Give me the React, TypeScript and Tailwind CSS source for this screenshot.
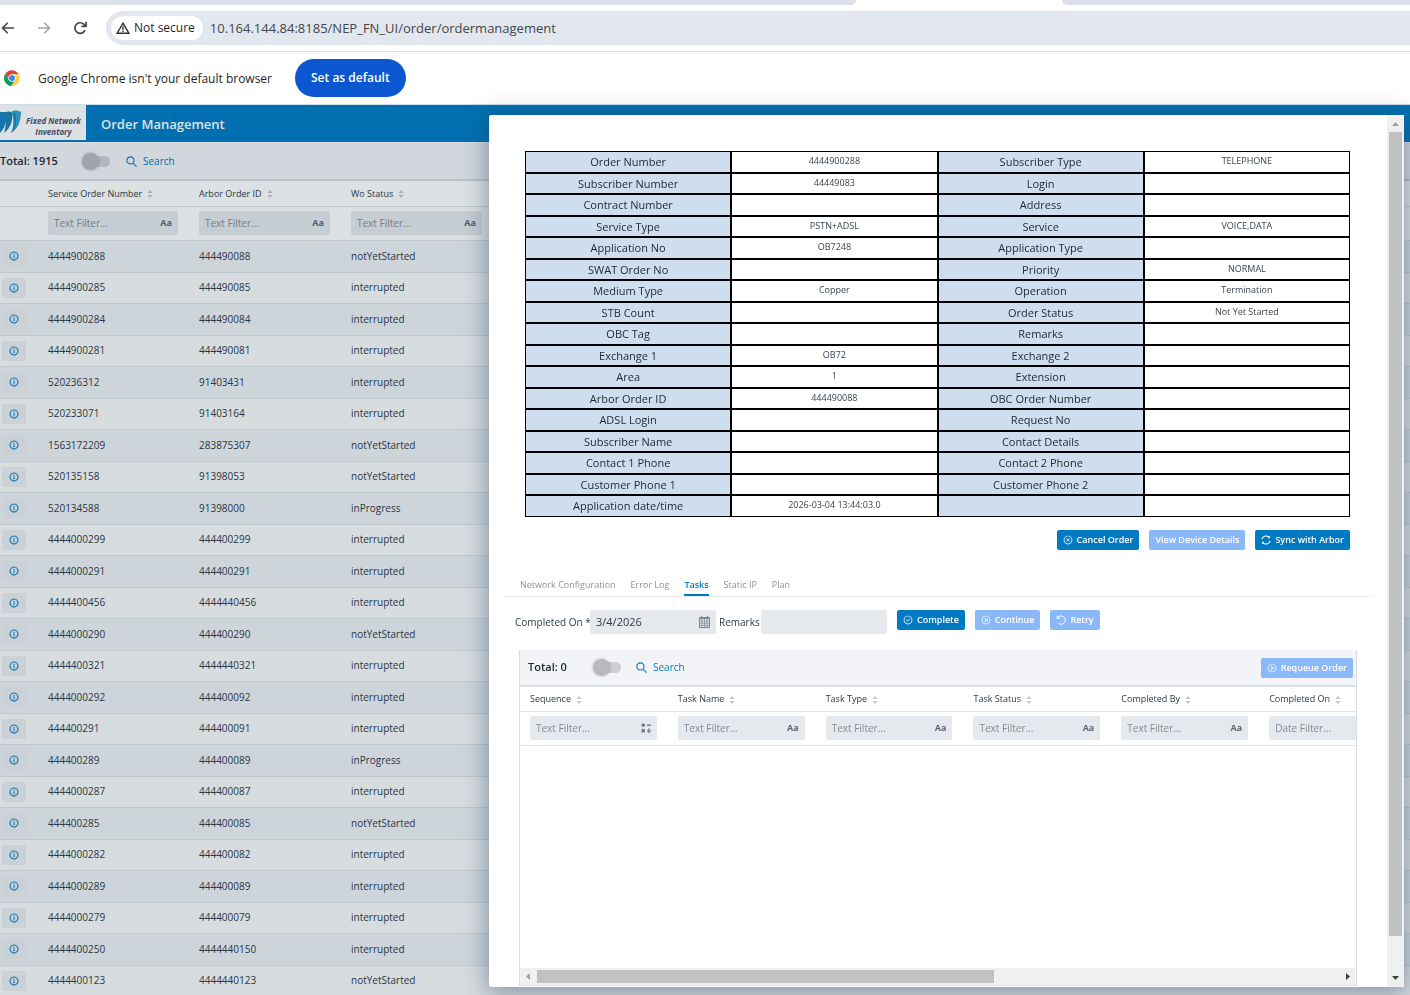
import { AiOutlineInfoCircle, AiOutlineCloseCircle, AiOutlineCheckCircle, AiOutlinePlayCircle } from "react-icons/ai";

const orders = [
  ["4444900288", "444490088", "notYetStarted"],
  ["4444900285", "444490085", "interrupted"],
  ["4444900284", "444490084", "interrupted"],
  ["4444900281", "444490081", "interrupted"],
  ["520236312", "91403431", "interrupted"],
  ["520233071", "91403164", "interrupted"],
  ["1563172209", "283875307", "notYetStarted"],
  ["520135158", "91398053", "notYetStarted"],
  ["520134588", "91398000", "inProgress"],
  ["4444000299", "444400299", "interrupted"],
  ["4444000291", "444400291", "interrupted"],
  ["4444400456", "4444440456", "interrupted"],
  ["4444000290", "444400290", "notYetStarted"],
  ["4444400321", "4444440321", "interrupted"],
  ["4444000292", "444400092", "interrupted"],
  ["444400291", "444400091", "interrupted"],
  ["444400289", "444400089", "inProgress"],
  ["4444000287", "444400087", "interrupted"],
  ["444400285", "444400085", "notYetStarted"],
  ["4444000282", "444400082", "interrupted"],
  ["4444000289", "444400089", "interrupted"],
  ["4444000279", "444400079", "interrupted"],
  ["4444400250", "4444440150", "interrupted"],
  ["4444400123", "4444440123", "notYetStarted"],
];

const details = [
  ["Order Number", "4444900288", "Subscriber Type", "TELEPHONE"],
  ["Subscriber Number", "44449083", "Login", ""],
  ["Contract Number", "", "Address", ""],
  ["Service Type", "PSTN+ADSL", "Service", "VOICE,DATA"],
  ["Application No", "OB7248", "Application Type", ""],
  ["SWAT Order No", "", "Priority", "NORMAL"],
  ["Medium Type", "Copper", "Operation", "Termination"],
  ["STB Count", "", "Order Status", "Not Yet Started"],
  ["OBC Tag", "", "Remarks", ""],
  ["Exchange 1", "OB72", "Exchange 2", ""],
  ["Area", "1", "Extension", ""],
  ["Arbor Order ID", "444490088", "OBC Order Number", ""],
  ["ADSL Login", "", "Request No", ""],
  ["Subscriber Name", "", "Contact Details", ""],
  ["Contact 1 Phone", "", "Contact 2 Phone", ""],
  ["Customer Phone 1", "", "Customer Phone 2", ""],
  ["Application date/time", "2026-03-04 13:44:03.0", "", ""],
];

const orderColumns = ["Service Order Number", "Arbor Order ID", "Wo Status"];
const taskColumns = ["Sequence", "Task Name", "Task Type", "Task Status", "Completed By", "Completed On"];
const tabs = ["Network Configuration", "Error Log", "Tasks", "Static IP", "Plan"];

function SortIcon() {
  return (
    <svg viewBox="0 0 6 8" className="ml-[5px] inline-block h-2 w-[6px] align-middle" fill="#c3c6cc">
      <path d="M3 0l2.600 3H0.400zM3 8L0.400 5h5.200z" />
    </svg>
  );
}

function SearchIcon() {
  return (
    <svg viewBox="0 0 12 12" className="h-[11px] w-[11px]" fill="none" stroke="currentColor" strokeWidth="1.2">
      <circle cx="4.8" cy="4.8" r="3.9" />
      <path d="M7.7 7.7l3.8 3.8" />
    </svg>
  );
}

function SyncIcon() {
  return (
    <svg viewBox="0 0 12 12" className="h-[10px] w-[10px]" fill="none" stroke="currentColor" strokeWidth="1.3">
      <path d="M1.1 5A5 5 0 0 1 10 3.200M10.900 7A5 5 0 0 1 2 8.800" />
      <path d="M10.300 1.200v2.200H8.200M1.700 10.800V8.600h2.100" strokeWidth="0.9" />
    </svg>
  );
}

function RetryIcon() {
  return (
    <svg viewBox="0 0 12 12" className="h-[10px] w-[10px]" fill="none" stroke="currentColor" strokeWidth="1.2">
      <path d="M1.8 3.6A5 5 0 1 1 3.2 10.2" />
      <path d="M1.3 1v3h3.1" />
    </svg>
  );
}

function OperatorsIcon() {
  return (
    <svg viewBox="0 0 10 10" className="h-[10px] w-[10px]" fill="none" stroke="#5d6772" strokeWidth="1.3">
      <path d="M0.3 2.2h3.8M2.2 0.3v3.8M6 2.2h3.8M0.7 6.3l3 3M3.7 6.3l-3 3M6 7.8h3.8M7.9 5.6v1.2M7.9 8.8V10" />
    </svg>
  );
}

function CalendarIcon() {
  return (
    <svg viewBox="0 0 11 12" className="h-3 w-[11px]" fill="none" stroke="#7d8590">
      <path d="M0.500 1.500h10v10H0.500zM0 2.500h11" />
      <path d="M0 5h11M0 7.200h11M0 9.400h11M3 3v9M5.500 3v9M8 3v9" strokeWidth="0.7" />
      <path d="M2.500 0v2M8.500 0v2" />
    </svg>
  );
}

function ChromeLogo() {
  return (
    <svg viewBox="0 0 48 48" className="h-4 w-4 shrink-0">
      <path fill="#db4437" d="M24 13h20.2A24 24 0 0 0 3.2 12L14.5 29.5z" />
      <path fill="#0f9d58" d="M14.5 29.5L3.2 12A24 24 0 0 0 22 48L33.5 29.5z" />
      <path fill="#ffcd40" d="M24 13h20.6A24 24 0 0 1 22 48L33.5 29.5z" />
      <circle cx="24" cy="24" r="11" fill="#fff" />
      <circle cx="24" cy="24" r="8.8" fill="#4285f4" />
    </svg>
  );
}

function Toggle({ label }: { label: string }) {
  return (
    <label className="relative flex h-[18px] w-7 items-center">
      <input type="checkbox" aria-label={label} className="peer sr-only" />
      <span className="ml-1 h-[11px] w-6 rounded-full bg-black/15" />
      <span className="absolute left-0 h-[17px] w-[17px] rounded-full bg-[#b9b9bb] shadow-[0_0_2px_1px_rgba(0,0,0,0.15)] peer-checked:left-3" />
    </label>
  );
}

function Filter({ label, placeholder = "Text Filter...", children }: { label: string; placeholder?: string; children?: React.ReactNode }) {
  return (
    <div className="flex h-6 items-center rounded-[2px] bg-[#e5e8ed] px-[6px]">
      <input aria-label={label + " filter"} placeholder={placeholder} className="w-0 min-w-0 flex-1 bg-transparent text-[10px] font-normal outline-none placeholder:text-[#848b96]" />
      {children}
    </div>
  );
}

function CaseButton() {
  return (
    <button aria-label="Match case" className="text-[9px] font-bold text-[#5d6772]">Aa</button>
  );
}

function ActionButton({ icon, text, disabled }: { icon?: React.ReactNode; text: string; disabled?: boolean }) {
  return (
    <button
      disabled={disabled}
      className="flex h-5 items-center gap-1 rounded-[2px] bg-[#007ac3] px-[6px] text-[9px] font-semibold whitespace-nowrap text-white disabled:bg-[#8bb8f8]"
    >
      {icon}
      {text}
    </button>
  );
}

function BrowserBar() {
  return (
    <div className="text-[#1f1f1f]">
      <div className="flex h-[5px] justify-between bg-white">
        <div className="w-[856px] rounded-br-lg bg-[#dde1e9]" />
        <div className="w-[348px] rounded-bl-lg bg-[#dde1e9]" />
      </div>
      <div className="flex h-[47px] items-center border-b border-[#dcdfe3] bg-white">
        <button aria-label="Back" className="w-[15px]">
          <svg viewBox="0 0 15 12" className="h-3 w-[15px]" fill="none" stroke="#474747" strokeWidth="1.6">
            <path d="M14 6H2.5M7.8 0.8L2.5 6l5.3 5.2" />
          </svg>
        </button>
        <button aria-label="Forward" className="ml-[22px] w-[15px]">
          <svg viewBox="0 0 15 12" className="h-3 w-[15px]" fill="none" stroke="#a6a6a6" strokeWidth="1.6">
            <path d="M1 6h11.5M7.2 0.8L12.5 6l-5.3 5.2" />
          </svg>
        </button>
        <button aria-label="Reload" className="ml-[21px]">
          <svg viewBox="0 0 14 14" className="h-[14px] w-[14px]" fill="none" stroke="#474747" strokeWidth="1.7">
            <path d="M12 9.2A5.3 5.3 0 1 1 11 3.4L12.6 5" />
            <path d="M13 0.8v4.6H8.4" />
          </svg>
        </button>
        <div className="ml-[19px] flex h-[34px] flex-1 items-center rounded-l-full bg-[#e2e6ee] pl-[5px]">
          <button className="flex h-6 items-center gap-1 rounded-full bg-white pr-2 pl-[5px] text-[12px]">
            <svg viewBox="0 0 14 12" className="h-3 w-[14px]" fill="none" stroke="#333" strokeWidth="1.4">
              <path d="M7 1.2L12.8 11.2H1.2zM7 4.6v3.4M7 8.8v1.2" />
            </svg>
            Not secure
          </button>
          <input
            aria-label="Address"
            defaultValue="10.164.144.84:8185/NEP_FN_UI/order/ordermanagement"
            className="ml-[7px] flex-1 bg-transparent pt-px text-[13px] text-[#44474b] outline-none"
          />
        </div>
      </div>
      <div className="flex h-[53px] items-center border-b border-[#c7dfec] bg-white pl-1">
        <ChromeLogo />
        <p className="ml-[18px] w-[257px] pt-px text-[12px]">Google Chrome isn't your default browser</p>
        <button className="h-[38px] rounded-full bg-[#0b57d0] px-4 text-[12px] font-semibold text-white">Set as default</button>
      </div>
    </div>
  );
}

function OrderList() {
  return (
    <main className="flex-1 bg-white">
      <div className="flex h-[37px] items-stretch bg-[#007cc4]">
        <div className="flex h-[35px] w-[86px] items-center bg-white">
          <svg viewBox="0 0 21 26" className="h-[26px] w-[21px]">
            <path d="M0 2h5c3 5 1 15-5 21z" fill="#1583bd" />
            <path d="M4 3c3-2 6-2 8 0 1 7-1 15-8 20 2-6 3-14 0-20z" fill="#1d7eb5" />
            <path d="M11 2c3-2 7-2 10 0 0 9-3 17-10 21 3-7 3-15 0-21z" fill="#35a3cf" />
            <path d="M13 3c3 6 2 13-2 20 5-4 6-12 4-20z" fill="#1a7bb0" />
          </svg>
          <div className="flex-1 pt-[6px] text-center text-[8px] leading-[11px] font-bold whitespace-nowrap text-[#475272] italic">
            Fixed Network
            <br />
            Inventory
          </div>
        </div>
        <h1 className="ml-[15px] self-center pt-[2px] text-[13px] font-semibold text-white">Order Management</h1>
      </div>
      <div className="mt-px flex h-[38px] items-center border-b-2 border-[#d5dae0] bg-[#f1f4f7] pt-px">
        <p className="w-[82px] text-[11px] font-semibold text-[#1d2733]">Total: 1915</p>
        <Toggle label="Show order filters" />
        <button className="ml-4 flex items-center gap-[6px] text-[10px] font-medium text-[#007ac3]">
          <SearchIcon />
          Search
        </button>
      </div>
      <table className="w-full table-fixed text-left text-[#2e3947]">
        <colgroup>
          <col className="w-[40px]" />
          <col className="w-[151px]" />
          <col className="w-[152px]" />
          <col className="w-[152px]" />
          <col />
        </colgroup>
        <thead>
          <tr className="h-[25px] border-b border-[#dde2e7]">
            <th />
            {orderColumns.map((column) => (
              <th key={column} className="pl-2 text-[9px] font-medium whitespace-nowrap">
                {column}
                <SortIcon />
              </th>
            ))}
            <th />
          </tr>
          <tr className="h-[34px] border-b border-[#dde2e7]">
            <td />
            {orderColumns.map((column) => (
              <td key={column} className="pr-[13px] pl-2">
                <Filter label={column}><CaseButton /></Filter>
              </td>
            ))}
            <td />
          </tr>
        </thead>
        <tbody className="text-[10px]">
          {orders.map((order, index) => (
            <tr key={index} className="border-b border-[#dde2e7] odd:h-[32px] odd:bg-[#edf1f6] even:h-[31px] even:bg-[#f8fafb]">
              <td className="pl-[2px]">
                <button aria-label="Order info" className="flex h-5 w-6 items-center justify-center rounded-[2px] bg-[#e9edf2] text-[#007ac3]">
                  <AiOutlineInfoCircle size={10} stroke="currentColor" strokeWidth={28} />
                </button>
              </td>
              {order.map((value, cell) => (
                <td key={cell} className="pl-2">{value}</td>
              ))}
              <td />
            </tr>
          ))}
        </tbody>
      </table>
    </main>
  );
}

function DetailsTable() {
  return (
    <table className="w-full table-fixed border-separate border-spacing-0 text-center">
      <tbody>
        {details.map((row) => (
          <tr key={row[0]} className="odd:h-[22px] even:h-[21px]">
            {row.map((value, index) =>
              index % 2 === 0 ? (
                <th key={index} scope="row" className="border border-black bg-[#cfdeef] p-0 text-[11px] leading-[18px] font-normal text-[#1d2733]">{value}</th>
              ) : (
                <td key={index} className="border border-black p-0 align-top text-[9px] leading-[17px] text-[#3a4450]">{value}</td>
              )
            )}
          </tr>
        ))}
      </tbody>
    </table>
  );
}

function TaskPanel() {
  return (
    <section className="mx-[15px] mt-4 flex min-h-0 flex-1 flex-col border border-t-0 border-[#d9dde2]">
      <div className="flex h-[37px] shrink-0 items-center border-b-2 border-[#d9dde4] bg-[#f2f4f7] pr-[3px] pl-2">
        <p className="w-[65px] text-[11px] font-semibold text-[#1d2733]">Total: 0</p>
        <Toggle label="Show task filters" />
        <button className="mr-auto ml-[15px] flex items-center gap-[6px] text-[10px] font-medium text-[#007ac3]">
          <SearchIcon />
          Search
        </button>
        <ActionButton disabled icon={<AiOutlinePlayCircle size={10} />} text="Requeue Order" />
      </div>
      <div className="flex-1 overflow-hidden">
        <table className="w-[887px] table-fixed text-left text-[#2e3947]">
          <thead>
            <tr className="h-6 border-b border-[#e3e6ea]">
              {taskColumns.map((column) => (
                <th key={column} className="pl-[10px] text-[9px] font-medium whitespace-nowrap">
                  {column}
                  <SortIcon />
                </th>
              ))}
            </tr>
            <tr className="h-[34px] border-b border-[#e3e6ea]">
              {taskColumns.map((column, index) => (
                <td key={column} className="pr-[11px] pl-[10px]">
                  {index === 5 ? (
                    <Filter label={column} placeholder="Date Filter..." />
                  ) : (
                    <Filter label={column}>
                      {index === 0 ? <button aria-label="Filter operator"><OperatorsIcon /></button> : <CaseButton />}
                    </Filter>
                  )}
                </td>
              ))}
            </tr>
          </thead>
        </table>
      </div>
      <div className="flex h-[17px] items-center bg-[#f0f0f0]">
        <svg viewBox="0 0 17 17" className="h-[17px] w-[17px]" fill="#a0a0a0"><path d="M10 5v7L6 8.5z" /></svg>
        <div className="flex-1">
          <div className="h-[13px] w-[57%] bg-[#c1c1c1]" />
        </div>
        <svg viewBox="0 0 17 17" className="h-[17px] w-[17px]" fill="#404040"><path d="M7 5v7l4-3.5z" /></svg>
      </div>
    </section>
  );
}

function OrderDialog() {
  return (
    <div role="dialog" aria-label="Order details" className="fixed top-[115px] right-[6px] bottom-2 left-[489px] flex rounded-[2px] bg-white shadow-[0_4px_24px_2px_rgba(30,60,90,0.45)]">
      <div className="flex min-w-0 flex-1 flex-col px-[15px] pt-9 pb-px">
        <div className="pr-[22px] pl-[21px]">
          <DetailsTable />
          <div className="mt-[13px] flex justify-end gap-[10px]">
            <ActionButton icon={<AiOutlineCloseCircle size={10} />} text="Cancel Order" />
            <ActionButton disabled text="View Device Details" />
            <ActionButton icon={<SyncIcon />} text="Sync with Arbor" />
          </div>
        </div>
        <div role="tablist" className="mt-6 flex h-[23px] gap-[15px] border-b border-[#e8eaed] px-4">
          {tabs.map((tab) => (
            <button
              key={tab}
              role="tab"
              aria-selected={tab === "Tasks"}
              className="border-b-2 border-transparent pt-[2px] text-[9px] text-[#8b929d] aria-selected:border-[#007ac3] aria-selected:font-semibold aria-selected:text-[#007ac3]"
            >
              {tab}
            </button>
          ))}
        </div>
        <div className="mt-[13px] flex items-start pl-[11px] text-[10px] text-[#2e3947]">
          <label htmlFor="completed" className="w-[75px] leading-6 whitespace-nowrap">Completed On *</label>
          <div className="flex h-6 w-[126px] items-center rounded-[2px] bg-[#e5e8ed] px-[6px]">
            <input id="completed" defaultValue="3/4/2026" className="w-0 flex-1 bg-transparent text-[11px] outline-none" />
            <button aria-label="Open calendar"><CalendarIcon /></button>
          </div>
          <label htmlFor="remarks" className="ml-[3px] w-[42px] leading-6">Remarks</label>
          <input id="remarks" className="mr-[10px] h-6 w-[126px] rounded-[2px] bg-[#e5e8ed] px-[6px] outline-none" />
          <div className="flex gap-[10px]">
            <ActionButton icon={<AiOutlineCheckCircle size={10} />} text="Complete" />
            <ActionButton disabled icon={<AiOutlinePlayCircle size={10} />} text="Continue" />
            <ActionButton disabled icon={<RetryIcon />} text="Retry" />
          </div>
        </div>
        <TaskPanel />
      </div>
      <div className="flex w-[17px] flex-col items-center bg-[#f0f0f0]">
        <svg viewBox="0 0 17 17" className="h-[17px] w-[17px] shrink-0" fill="#a0a0a0"><path d="M5 11h7L8.500 7z" /></svg>
        <div className="w-full flex-1 px-[2px]">
          <div className="h-[96%] bg-[#c1c1c1]" />
        </div>
        <svg viewBox="0 0 17 17" className="h-[17px] w-[17px] shrink-0" fill="#404040"><path d="M5 6h7l-3.500 4z" /></svg>
      </div>
    </div>
  );
}

export default function App() {
  return (
    <div className="flex h-screen flex-col overflow-hidden font-['Open_Sans','Noto_Sans',sans-serif]">
      <BrowserBar />
      <div className="relative flex min-h-0 flex-1 flex-col overflow-hidden">
        <OrderList />
        <div className="absolute inset-0 bg-[#10283c]/14" />
      </div>
      <OrderDialog />
    </div>
  );
}
